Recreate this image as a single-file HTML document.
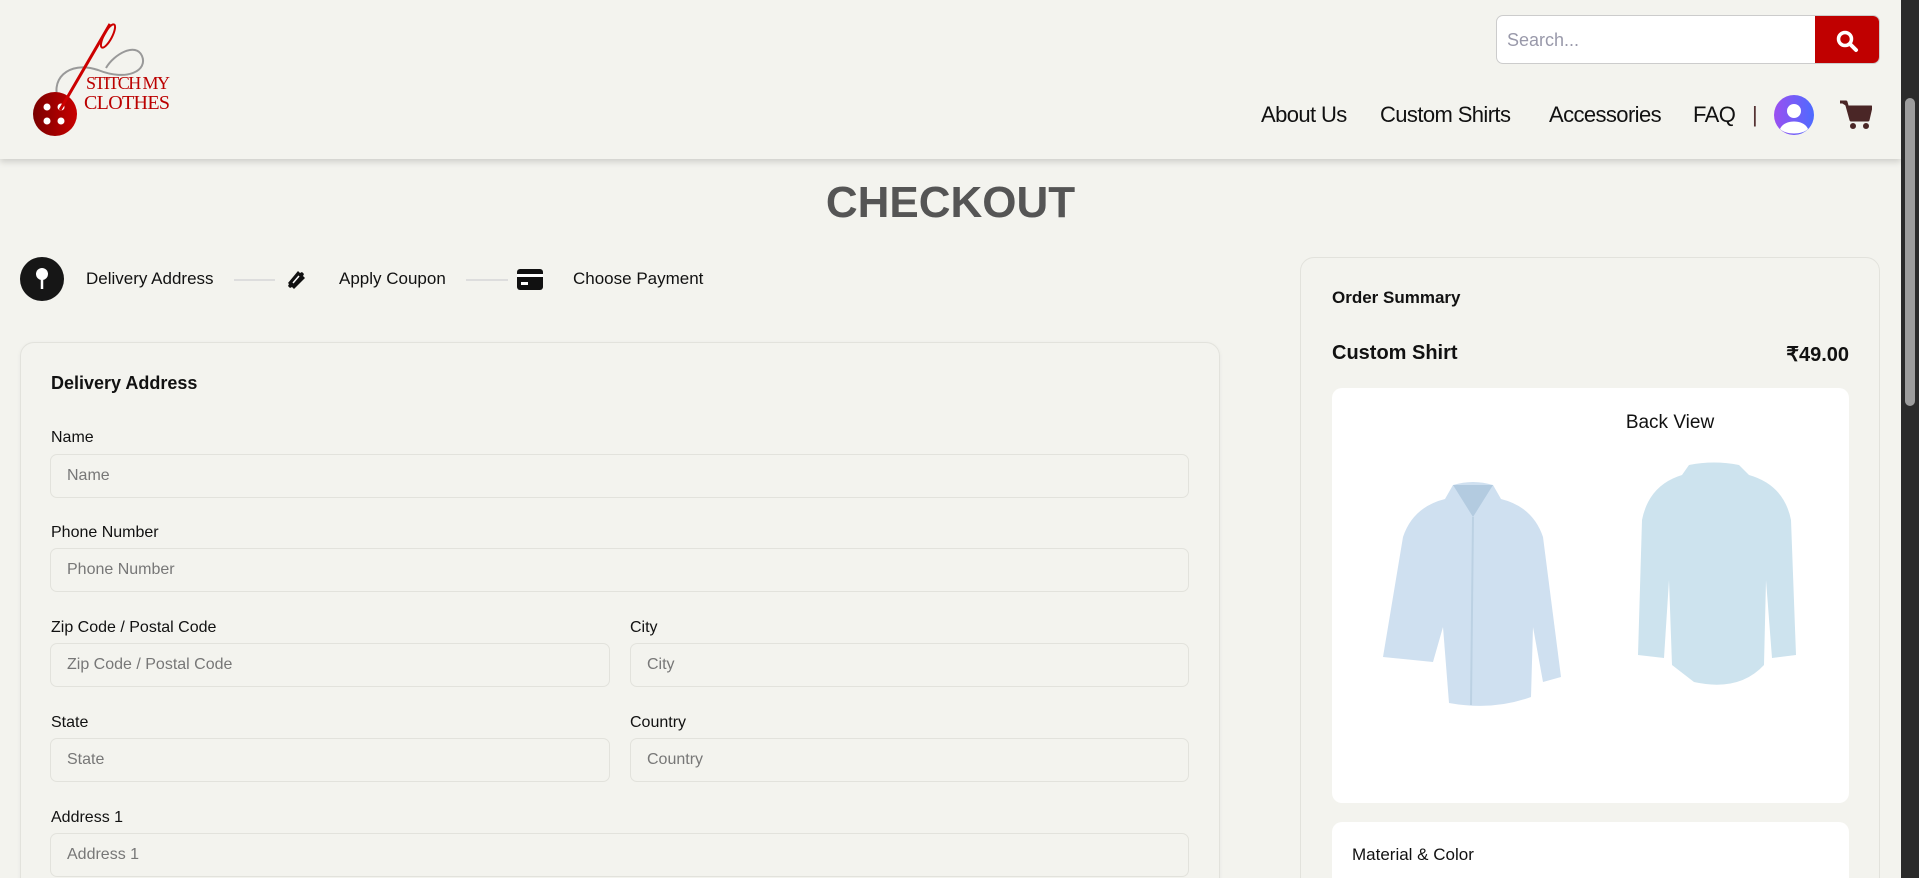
<!DOCTYPE html>
<html><head><meta charset="utf-8"><style>
*{box-sizing:border-box;margin:0;padding:0}
html,body{width:1919px;height:878px;overflow:hidden}
body{background:#f3f3ee;font-family:"Liberation Sans",sans-serif;color:#111;position:relative}
.abs{position:absolute}
header{position:absolute;left:0;top:0;width:1901px;height:159px;background:#f3f3ee;box-shadow:0 3px 6px rgba(0,0,0,.15)}
.nav{position:absolute;top:102px;font-size:22px;font-weight:500;color:#111;letter-spacing:-0.6px}
.lbl{position:absolute;left:51px;font-size:16px;color:#111}
.inp{position:absolute;height:44px;border:1px solid #e2e2dc;border-radius:7px;background:#f3f3ee;font-size:16px;color:#777;padding:12px 0 0 16px}
.step{position:absolute;top:269px;font-size:17px;color:#111}
</style></head><body>
<header>
<svg class="abs" style="left:28px;top:20px" width="160" height="122" viewBox="0 0 160 122">
<defs><linearGradient id="g" x1="0" x2="1"><stop offset="0" stop-color="#7a0000"/><stop offset="1" stop-color="#c80000"/></linearGradient></defs>
<path d="M32 84 C20 60 40 40 70 50 C100 62 120 50 114 36 C108 22 86 34 78 48" fill="none" stroke="#999" stroke-width="2"/>
<circle cx="27" cy="94" r="22" fill="url(#g)"/>
<circle cx="19" cy="87" r="3.5" fill="#fff"/><circle cx="33" cy="87" r="3.5" fill="#fff"/>
<circle cx="19" cy="101" r="3.5" fill="#fff"/><circle cx="33" cy="101" r="3.5" fill="#fff"/>
<path d="M32 90 L82 4" stroke="#c00" stroke-width="3"/>
<ellipse cx="80" cy="16" rx="4" ry="13" transform="rotate(28 80 16)" fill="none" stroke="#c00" stroke-width="2"/>
<text x="58" y="69" font-family="Liberation Serif" font-size="18" fill="#b00" textLength="84">STITCH MY</text>
<text x="56" y="89" font-family="Liberation Serif" font-size="20" fill="#b00" textLength="86">CLOTHES</text>
</svg>
<div class="abs" style="left:1496px;top:15px;width:384px;height:49px;border:1px solid #ccc;border-radius:7px;background:#fff;overflow:hidden">
<span class="abs" style="left:10px;top:14px;font-size:18px;color:#99a">Search...</span>
<div class="abs" style="right:0;top:0;width:64px;height:49px;background:#c00000">
<svg class="abs" style="left:20px;top:13px" width="24" height="24" viewBox="0 0 24 24"><circle cx="10" cy="10" r="6.5" fill="none" stroke="#fff" stroke-width="3.5"/><path d="M15 15 L21 21" stroke="#fff" stroke-width="4" stroke-linecap="round"/></svg></div></div>
<span class="nav" style="left:1261px">About Us</span>
<span class="nav" style="left:1380px">Custom Shirts</span>
<span class="nav" style="left:1549px">Accessories</span>
<span class="nav" style="left:1693px">FAQ</span>
<span class="nav" style="left:1752px;color:#533">|</span>
<svg class="abs" style="left:1774px;top:95px" width="40" height="40" viewBox="0 0 40 40"><defs><linearGradient id="a" x1="0" x2="1"><stop offset="0" stop-color="#9b4ff0"/><stop offset="1" stop-color="#4d6bff"/></linearGradient></defs><circle cx="20" cy="20" r="20" fill="url(#a)"/><circle cx="20" cy="16" r="7" fill="#fff"/><path d="M6 34 C10 24 30 24 34 34 C28 40 12 40 6 34Z" fill="#fff"/></svg>
<svg class="abs" style="left:1840px;top:100px" width="32" height="30" viewBox="0 0 32 30"><path d="M0 2 H6 L11 20 H28 L31 7 H8" fill="#4a2626" stroke="#4a2626" stroke-width="3" stroke-linejoin="round"/><circle cx="13" cy="26" r="3" fill="#4a2626"/><circle cx="26" cy="26" r="3" fill="#4a2626"/></svg>
</header>
<div class="abs" style="left:1901px;top:0;width:18px;height:878px;background:#2b2b2b"><div class="abs" style="left:4px;top:98px;width:10px;height:308px;background:#9d9d9d;border-radius:5px"></div></div>

<div class="abs" style="left:0;width:1901px;top:178px;text-align:center;font-size:44px;font-weight:bold;color:#555">CHECKOUT</div>

<svg class="abs" style="left:20px;top:257px" width="44" height="44" viewBox="0 0 44 44"><circle cx="22" cy="22" r="22" fill="#161616"/><circle cx="22" cy="17" r="6" fill="#fff"/><path d="M22 22 V32" stroke="#fff" stroke-width="2.5"/></svg>
<span class="step" style="left:86px">Delivery Address</span>
<div class="abs" style="left:234px;top:279px;width:41px;height:2px;background:#ddd"></div>
<svg class="abs" style="left:284px;top:267px" width="24" height="24" viewBox="0 0 24 24"><path d="M4 16 L14 4 L16 6 L18 5 L20 7 L19 9 L21 11 L10 22 L8 20 L6 21 L4 19 L5 17Z" fill="#111"/><path d="M9 16 L15 9" stroke="#fff" stroke-width="1.5"/></svg>
<span class="step" style="left:339px">Apply Coupon</span>
<div class="abs" style="left:466px;top:279px;width:42px;height:2px;background:#ddd"></div>
<svg class="abs" style="left:517px;top:269px" width="26" height="21" viewBox="0 0 26 21"><rect x="0" y="0" width="26" height="21" rx="3" fill="#111"/><rect x="0" y="5" width="26" height="3" fill="#fff"/><rect x="4" y="13" width="7" height="3" fill="#fff"/></svg>
<span class="step" style="left:573px">Choose Payment</span>

<div class="abs" style="left:20px;top:342px;width:1200px;height:560px;border:1px solid #e2e2dc;border-radius:14px;box-shadow:0 1px 4px rgba(0,0,0,.05)"></div>
<div class="abs" style="left:51px;top:373px;font-size:18px;font-weight:bold">Delivery Address</div>
<span class="lbl" style="top:429px">Name</span>
<div class="inp" style="left:50px;top:454px;width:1139px">Name</div>
<span class="lbl" style="top:524px">Phone Number</span>
<div class="inp" style="left:50px;top:548px;width:1139px">Phone Number</div>
<span class="lbl" style="top:619px">Zip Code / Postal Code</span>
<div class="inp" style="left:50px;top:643px;width:560px">Zip Code / Postal Code</div>
<span class="lbl" style="top:619px;left:630px">City</span>
<div class="inp" style="left:630px;top:643px;width:559px">City</div>
<span class="lbl" style="top:714px">State</span>
<div class="inp" style="left:50px;top:738px;width:560px">State</div>
<span class="lbl" style="top:714px;left:630px">Country</span>
<div class="inp" style="left:630px;top:738px;width:559px">Country</div>
<span class="lbl" style="top:809px">Address 1</span>
<div class="inp" style="left:50px;top:833px;width:1139px">Address 1</div>

<div class="abs" style="left:1300px;top:257px;width:580px;height:660px;border:1px solid #e2e2dc;border-radius:14px"></div>
<div class="abs" style="left:1332px;top:288px;font-size:17px;font-weight:bold">Order Summary</div>
<div class="abs" style="left:1332px;top:342px;font-size:20px;font-weight:bold">Custom Shirt</div>
<div class="abs" style="left:1700px;width:149px;text-align:right;top:342px;font-size:20px;font-weight:bold">₹49.00</div>
<div class="abs" style="left:1332px;top:388px;width:517px;height:415px;background:#fff;border-radius:10px"></div>
<div class="abs" style="left:1580px;width:180px;text-align:center;top:412px;font-size:19px">Back View</div>
<svg class="abs" style="left:1383px;top:477px" width="180" height="235" viewBox="0 0 180 235">
<path d="M70 8 Q90 2 110 8 L118 22 Q150 30 160 60 L178 200 L160 205 L150 150 L148 220 Q110 234 66 226 L60 150 L50 185 L0 180 L20 60 Q30 30 62 22Z" fill="#cfe0f0"/>
<path d="M70 8 L90 40 L110 8" fill="#b3cbe0"/><path d="M90 40 L88 228" stroke="#bcd1e3" stroke-width="2"/>
</svg>
<svg class="abs" style="left:1634px;top:460px" width="165" height="230" viewBox="0 0 165 230">
<path d="M55 5 Q80 0 105 5 L115 15 Q150 25 157 60 L162 195 L138 198 L132 120 L130 205 Q105 232 60 222 L38 205 L35 120 L30 198 L4 195 L8 60 Q15 25 48 15Z" fill="#cde3ee"/>
</svg>
<div class="abs" style="left:1332px;top:822px;width:517px;height:80px;background:#fff;border-radius:10px"></div>
<div class="abs" style="left:1352px;top:845px;font-size:17px">Material &amp; Color</div>
</body></html>
